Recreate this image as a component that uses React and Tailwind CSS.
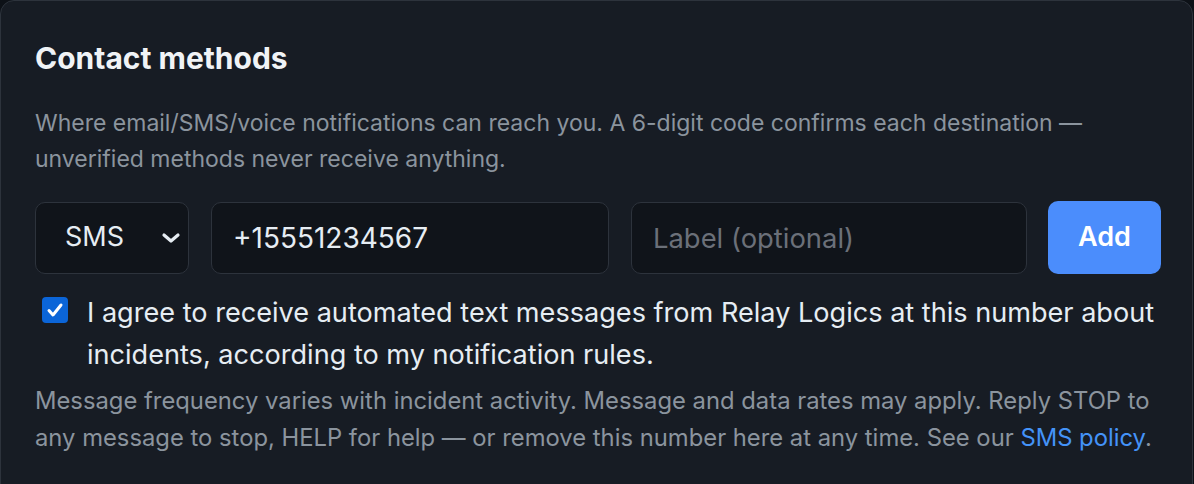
export default function App() {
  return (
    <div className="min-h-screen bg-[#0d1117]" style={{ fontFamily: 'Inter, "Noto Sans", sans-serif' }}>
      <div className="w-[1193px] h-[520px] rounded-[14px] border border-[#2d333c] bg-[#171c24] pl-[34px] pr-[28px] pt-[38px]">
        <h2 className="text-[30px] leading-[38px] font-bold text-[#f0f3f6]">Contact methods</h2>
        <p className="mt-[28px] text-[23px] leading-[36px] text-[#8b949e]">
          Where email/SMS/voice notifications can reach you. A 6-digit code confirms each destination — unverified methods never receive anything.
        </p>

        <div className="mt-[24px] flex items-center gap-[22px]">
          <div className="flex h-[72px] w-[154px] shrink-0 items-center justify-between rounded-[10px] border border-[#2d333c] bg-[#10141a] pl-[29px] pr-[7px] text-[27px] text-[#e6edf3]">
            <span>SMS</span>
            <svg width="20" height="12" viewBox="0 0 20 12" fill="none">
              <path d="M3 3l7 6 7-6" stroke="#e6edf3" strokeWidth="3.2" strokeLinecap="round" strokeLinejoin="round" />
            </svg>
          </div>
          <input
            defaultValue="+15551234567"
            className="h-[72px] w-[398px] shrink-0 rounded-[10px] border border-[#2d333c] bg-[#10141a] px-[21px] text-[28px] text-[#e6edf3] outline-none"
          />
          <input
            placeholder="Label (optional)"
            className="h-[72px] w-[396px] shrink-0 rounded-[10px] border border-[#2d333c] bg-[#10141a] px-[21px] text-[27.4px] text-[#e6edf3] outline-none placeholder:text-[#6b7079]"
          />
          <button className="-ml-[1px] h-[73px] w-[113px] shrink-0 rounded-[10px] bg-[#4b8dfc] text-[27px] font-semibold text-white">Add</button>
        </div>

        <label className="mt-[18px] flex items-start gap-[19px] pl-[7px]">
          <span className="mt-[5px] flex h-[26px] w-[26px] shrink-0 items-center justify-center rounded-[4px] bg-[#0b65d8]">
            <svg width="18" height="16" viewBox="0 0 18 16" fill="none">
              <path d="M3 8.5l4 4.5L15 3" stroke="#ffffff" strokeWidth="3" strokeLinecap="round" strokeLinejoin="round" />
            </svg>
          </span>
          <span className="text-[27.1px] leading-[42px] text-[#e6edf3]">
            I agree to receive automated text messages from Relay Logics at this number about incidents, according to my notification rules.
          </span>
        </label>

        <p className="mt-[6px] text-[23.8px] leading-[37px] text-[#8b949e]">
          Message frequency varies with incident activity. Message and data rates may apply. Reply STOP to any message to stop, HELP for help — or remove this number here at any time. See our{' '}
          <a href="#" className="text-[#4493f8]">SMS policy</a>.
        </p>
      </div>
    </div>
  );
}
